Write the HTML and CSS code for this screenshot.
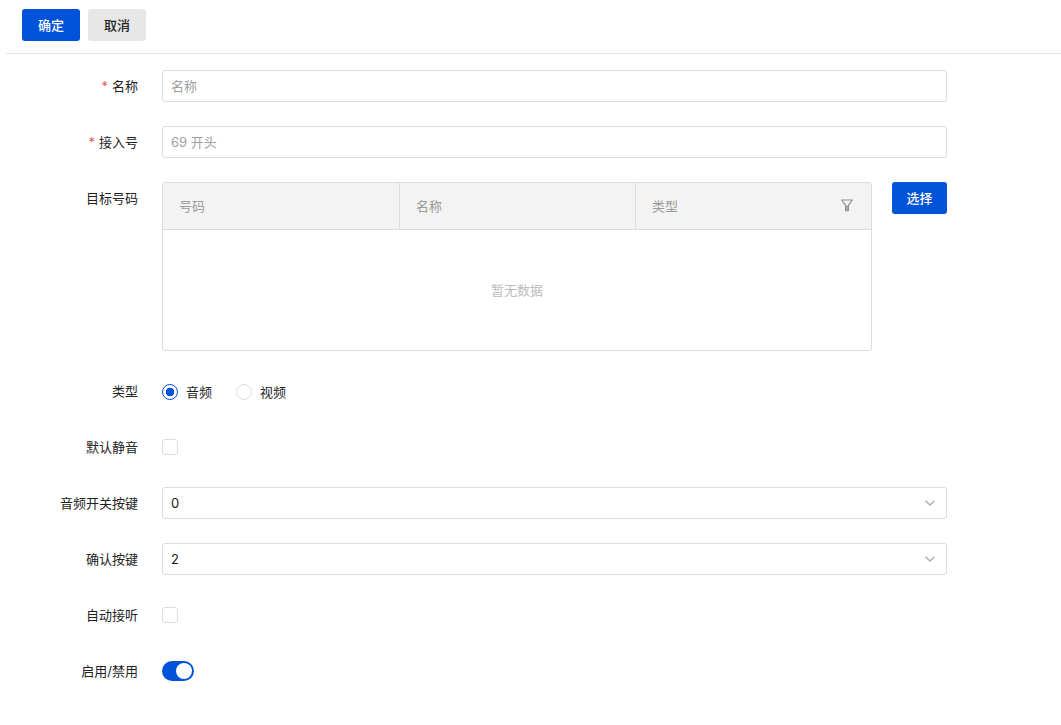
FILE: index.html
```html
<!DOCTYPE html>
<html lang="zh-CN">
<head>
<meta charset="utf-8">
<title>表单</title>
<link rel="stylesheet" href="styles.css">
</head>
<body>
<div class="page">
  <div class="toolbar">
    <button class="btn btn-primary">确定</button>
    <button class="btn btn-default">取消</button>
  </div>
  <form class="form">
    <div class="row">
      <label class="label"><span class="req">*</span>名称</label>
      <div class="control"><div class="input placeholder">名称</div></div>
    </div>
    <div class="row">
      <label class="label"><span class="req">*</span>接入号</label>
      <div class="control"><div class="input placeholder">69 开头</div></div>
    </div>
    <div class="row row-table">
      <label class="label">目标号码</label>
      <div class="control control-table">
        <div class="table">
          <div class="thead">
            <div class="th">号码</div>
            <div class="th">名称</div>
            <div class="th th-filter">类型
              <svg class="filter" viewBox="0 0 12 13" width="12" height="13"><path d="M.7 1h10.6L7.4 6.4v5.2H4.6V6.4z" fill="none" stroke="#8f8f8f" stroke-width="1.2" stroke-linejoin="round"/><path d="M5 6.5h2v5H5z" fill="#a5a5a5"/></svg>
            </div>
          </div>
          <div class="empty">暂无数据</div>
        </div>
        <button class="btn btn-primary btn-pick" type="button">选择</button>
      </div>
    </div>
    <div class="row">
      <label class="label">类型</label>
      <div class="control radios">
        <span class="radio-item"><span class="radio radio-on"></span>音频</span>
        <span class="radio-item"><span class="radio"></span>视频</span>
      </div>
    </div>
    <div class="row">
      <label class="label">默认静音</label>
      <div class="control"><span class="checkbox"></span></div>
    </div>
    <div class="row">
      <label class="label">音频开关按键</label>
      <div class="control"><div class="input select">0
        <svg class="chev" viewBox="0 0 10 6" width="10" height="6"><path d="M.6.8 5 5 9.4.8" fill="none" stroke="#aaa" stroke-width="1.3"/></svg></div></div>
    </div>
    <div class="row">
      <label class="label">确认按键</label>
      <div class="control"><div class="input select">2
        <svg class="chev" viewBox="0 0 10 6" width="10" height="6"><path d="M.6.8 5 5 9.4.8" fill="none" stroke="#aaa" stroke-width="1.3"/></svg></div></div>
    </div>
    <div class="row">
      <label class="label">自动接听</label>
      <div class="control"><span class="checkbox"></span></div>
    </div>
    <div class="row">
      <label class="label">启用/禁用</label>
      <div class="control"><span class="switch"><span class="knob"></span></span></div>
    </div>
  </form>
</div>
</body>
</html>
```
FILE: styles.css
```css
* { box-sizing: border-box; }
html, body { margin: 0; padding: 0; background: #fff; }
body {
  font-family: Inter, "Noto Sans CJK SC", sans-serif;
  font-size: 13px;
  color: #222;
  overflow: hidden;
}
.page { padding-left: 6px; }
.toolbar {
  display: flex;
  gap: 8px;
  padding: 9px 16px 12px;
  border-bottom: 1px solid #e6e6e6;
}
.btn {
  width: 58px;
  height: 32px;
  border: 0;
  border-radius: 3px;
  font: inherit;
  font-weight: 500;
  padding: 0 0 2px;
}
.btn-primary { background: #0052d9; color: #fff; }
.btn-default { background: #e7e7e7; color: #222; }
.btn-pick { width: 55px; flex: none; }
.form { padding-top: 16px; }
.row {
  display: flex;
  align-items: center;
  gap: 24px;
  margin-bottom: 24px;
  min-height: 32px;
}
.row-table { align-items: flex-start; }
.label {
  width: 132px;
  flex: none;
  text-align: right;
  line-height: 32px;
}
.req { color: #d9645c; margin-right: 4px; }
.control { width: 785px; flex: none; }
.control-table { display: flex; justify-content: space-between; }
.input {
  height: 32px;
  border: 1px solid #dcdcdc;
  border-radius: 3px;
  padding: 0 8px;
  line-height: 30px;
  color: #181818;
}
.placeholder { color: #a0a0a0; }
.select { display: flex; justify-content: space-between; align-items: center; padding-right: 11px; }
.table {
  width: 710px;
  height: 169px;
  border: 1px solid #dcdcdc;
  border-radius: 3px;
}
.thead {
  display: grid;
  grid-template-columns: 1fr 1fr 1fr;
  height: 47px;
  background: #f3f3f3;
  border-bottom: 1px solid #dcdcdc;
  color: #9a9a9a;
}
.th {
  padding: 0 16px;
  line-height: 46px;
  border-left: 1px solid #dcdcdc;
  display: flex;
  align-items: center;
}
.th:first-child { border-left: 0; }
.th-filter { justify-content: space-between; padding-right: 18px; }
.filter { display: block; margin-top: -1px; }
.empty {
  height: 118px;
  display: flex;
  align-items: center;
  justify-content: center;
  color: #bbb;
}
.radios { display: flex; gap: 24px; height: 32px; padding-top: 1px; align-items: flex-start; }
.radio-item { display: flex; align-items: center; gap: 8px; line-height: 32px; }
.radio {
  width: 16px;
  height: 16px;
  border-radius: 50%;
  border: 1px solid #dcdcdc;
  background: #fff;
}
.radio-on {
  border-color: #0052d9;
  background: radial-gradient(circle, #0052d9 0 4px, #fff 4.6px);
}
.checkbox {
  display: block;
  width: 16px;
  height: 16px;
  border: 1px solid #dcdcdc;
  border-radius: 3px;
}
.switch {
  display: block;
  width: 32px;
  height: 20px;
  border-radius: 10px;
  background: #0052d9;
  padding: 2px;
}
.knob {
  display: block;
  width: 16px;
  height: 16px;
  margin-left: 12px;
  border-radius: 50%;
  background: #fff;
}
```
